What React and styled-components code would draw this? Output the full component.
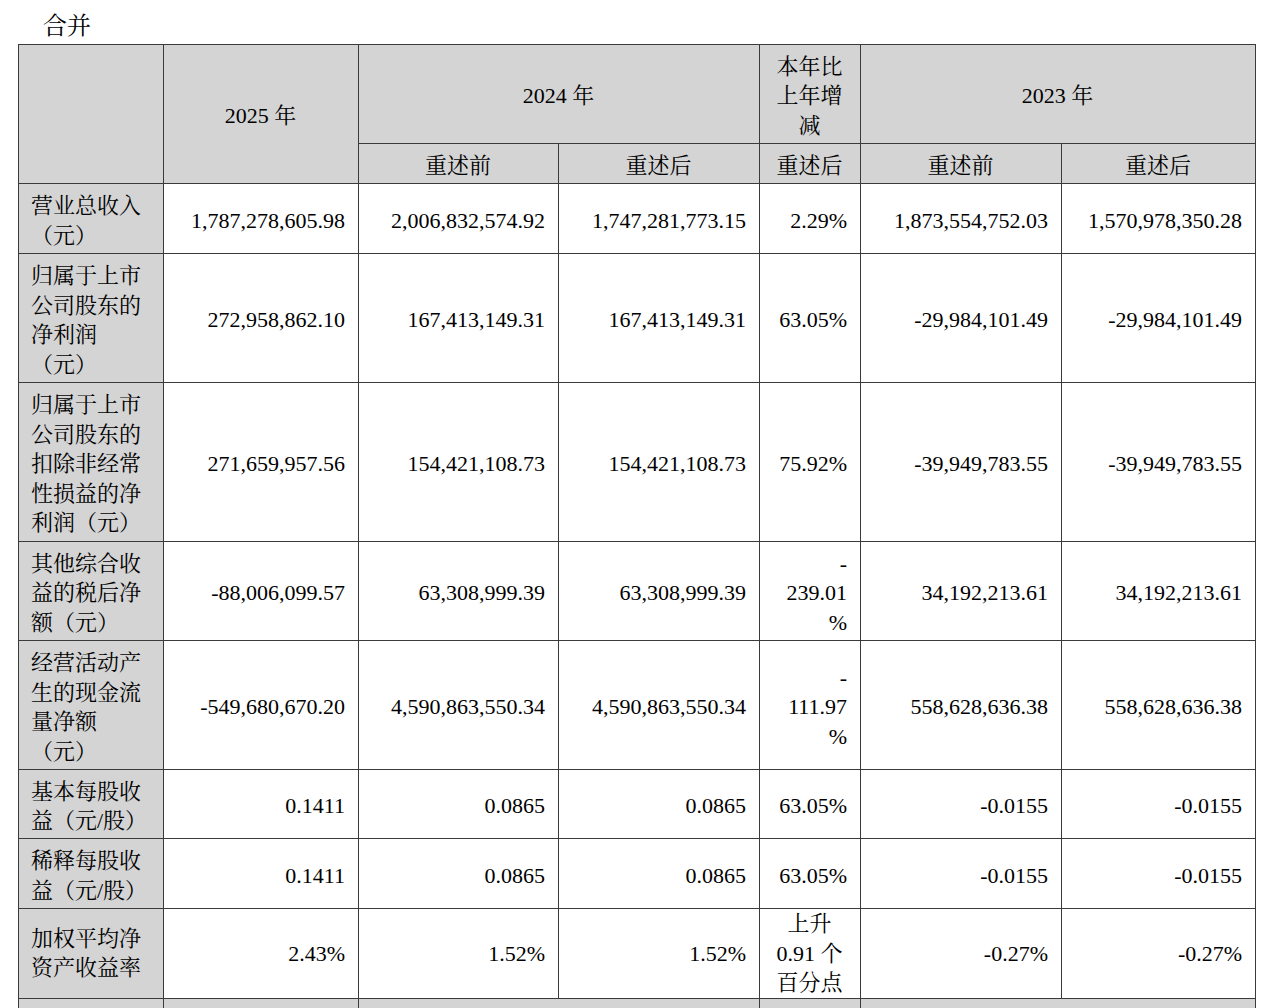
import React from "react";
import styled, { createGlobalStyle } from "styled-components";

const GlobalStyle = createGlobalStyle`
  html, body {
    margin: 0;
    padding: 0;
    background: #ffffff;
  }
  body {
    font-family: "Liberation Serif", "Noto Serif CJK SC", "Noto Sans CJK SC", serif;
    color: #000;
    text-spacing-trim: space-all;
  }
`;

const Page = styled.div`
  width: 1278px;
  height: 1008px;
  overflow: hidden;
  box-sizing: border-box;
`;

const Title = styled.div`
  box-sizing: border-box;
  height: 44px;
  padding: 11px 0 0 43px;
  font-size: 24px;
  line-height: 30px;
`;

const TableWrap = styled.div`
  padding-left: 18px;
`;

const Table = styled.table`
  border-collapse: collapse;
  table-layout: fixed;
  width: 1238px;
  font-size: 22px;
  line-height: 29.5px;
  text-spacing-trim: space-all;
`;

const Row = styled.tr`
  height: ${(p) => p.$h}px;
  & > td,
  & > th {
    padding-top: ${(p) => (p.$pad === undefined ? 4 : p.$pad)}px;
  }
`;

const HeadCell = styled.th`
  background: #d4d4d4;
  border: 1px solid #3a3a3a;
  font-weight: normal;
  text-align: center;
  vertical-align: middle;
  padding: 4px 13px 0 12px;
`;

const LabelCell = styled.td`
  background: #d4d4d4;
  border: 1px solid #3a3a3a;
  text-align: left;
  vertical-align: middle;
  padding: 4px 8px 0 12px;
`;

const ValueCell = styled.td`
  background: #ffffff;
  border: 1px solid #3a3a3a;
  text-align: ${(p) => p.$align || "right"};
  vertical-align: middle;
  padding: 4px 13px 0 12px;
  white-space: nowrap;
`;

const Line = styled.div`
  display: block;
`;

const widths = [145, 195, 200, 201, 101, 201, 194];

const rows = [
  {
    h: 70,
    label: "营业总收入（元）",
    values: [
      "1,787,278,605.98",
      "2,006,832,574.92",
      "1,747,281,773.15",
      "2.29%",
      "1,873,554,752.03",
      "1,570,978,350.28",
    ],
  },
  {
    h: 129,
    label: "归属于上市公司股东的净利润（元）",
    values: [
      "272,958,862.10",
      "167,413,149.31",
      "167,413,149.31",
      "63.05%",
      "-29,984,101.49",
      "-29,984,101.49",
    ],
  },
  {
    h: 159,
    label: "归属于上市公司股东的扣除非经常性损益的净利润（元）",
    values: [
      "271,659,957.56",
      "154,421,108.73",
      "154,421,108.73",
      "75.92%",
      "-39,949,783.55",
      "-39,949,783.55",
    ],
  },
  {
    h: 99,
    label: "其他综合收益的税后净额（元）",
    values: [
      "-88,006,099.57",
      "63,308,999.39",
      "63,308,999.39",
      ["-", "239.01", "%"],
      "34,192,213.61",
      "34,192,213.61",
    ],
  },
  {
    h: 129,
    label: "经营活动产生的现金流量净额（元）",
    values: [
      "-549,680,670.20",
      "4,590,863,550.34",
      "4,590,863,550.34",
      ["-", "111.97", "%"],
      "558,628,636.38",
      "558,628,636.38",
    ],
  },
  {
    h: 69,
    label: "基本每股收益（元/股）",
    values: ["0.1411", "0.0865", "0.0865", "63.05%", "-0.0155", "-0.0155"],
  },
  {
    h: 70,
    label: "稀释每股收益（元/股）",
    values: ["0.1411", "0.0865", "0.0865", "63.05%", "-0.0155", "-0.0155"],
  },
  {
    h: 89,
    pad: 0,
    label: "加权平均净资产收益率",
    values: [
      "2.43%",
      "1.52%",
      "1.52%",
      { center: true, lines: ["上升", "0.91 个", "百分点"] },
      "-0.27%",
      "-0.27%",
    ],
  },
];

function renderValue(v, i) {
  if (Array.isArray(v)) {
    return (
      <ValueCell key={i}>
        {v.map((l, j) => (
          <Line key={j}>{l}</Line>
        ))}
      </ValueCell>
    );
  }
  if (v && typeof v === "object") {
    return (
      <ValueCell key={i} $align="center">
        {v.lines.map((l, j) => (
          <Line key={j}>{l}</Line>
        ))}
      </ValueCell>
    );
  }
  return <ValueCell key={i}>{v}</ValueCell>;
}

export default function App() {
  return (
    <Page>
      <GlobalStyle />
      <Title>合并</Title>
      <TableWrap>
        <Table>
          <colgroup>
            {widths.map((w, i) => (
              <col key={i} style={{ width: w }} />
            ))}
          </colgroup>
          <thead>
            <Row $h={99}>
              <HeadCell rowSpan={2} />
              <HeadCell rowSpan={2}>2025 年</HeadCell>
              <HeadCell colSpan={2}>2024 年</HeadCell>
              <HeadCell>本年比上年增减</HeadCell>
              <HeadCell colSpan={2}>2023 年</HeadCell>
            </Row>
            <Row $h={40}>
              <HeadCell>重述前</HeadCell>
              <HeadCell>重述后</HeadCell>
              <HeadCell>重述后</HeadCell>
              <HeadCell>重述前</HeadCell>
              <HeadCell>重述后</HeadCell>
            </Row>
          </thead>
          <tbody>
            {rows.map((r, idx) => (
              <Row key={idx} $h={r.h} $pad={r.pad}>
                <LabelCell>{r.label}</LabelCell>
                {r.values.map((v, i) => renderValue(v, i))}
              </Row>
            ))}
            <Row $h={40}>
              <HeadCell />
              <HeadCell />
              <HeadCell colSpan={2} />
              <HeadCell />
              <HeadCell colSpan={2} />
            </Row>
          </tbody>
        </Table>
      </TableWrap>
    </Page>
  );
}
